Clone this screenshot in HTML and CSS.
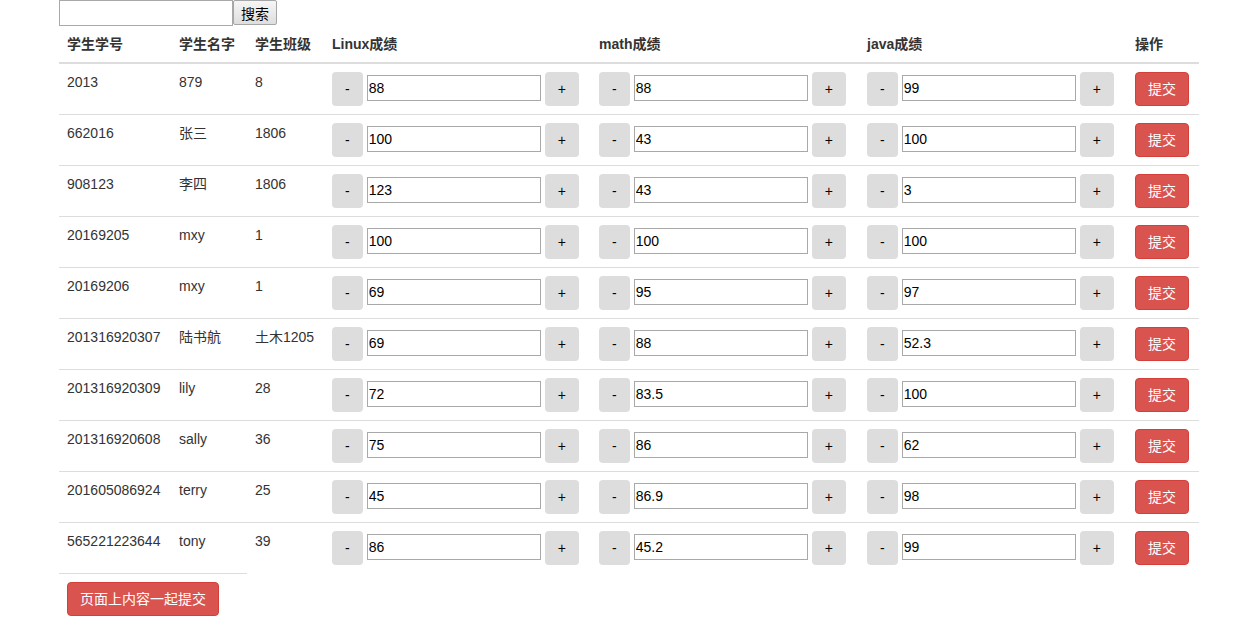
FILE: index.html
```html
<!DOCTYPE html>
<html lang="zh-CN">
<head>
<meta charset="utf-8">
<title>学生成绩</title>
<link rel="stylesheet" href="styles.css">
</head>
<body>
<div class="page">
  <form class="search">
    <input class="search-input" type="text"><button class="search-btn" type="button">搜索</button>
  </form>
  <table class="grades">
    <colgroup>
      <col class="c-id"><col class="c-name"><col class="c-class"><col class="c-score"><col class="c-score2"><col class="c-score2"><col class="c-op">
    </colgroup>
    <thead>
      <tr><th>学生学号</th><th>学生名字</th><th>学生班级</th><th>Linux成绩</th><th>math成绩</th><th>java成绩</th><th>操作</th></tr>
    </thead>
    <tbody id="rows"></tbody>
    <tfoot>
      <tr><td colspan="2"><button class="btn btn-danger" type="button">页面上内容一起提交</button></td></tr>
    </tfoot>
  </table>
</div>
<script>
var data = [
  ["2013","879","8","88","88","99"],
  ["662016","张三","1806","100","43","100"],
  ["908123","李四","1806","123","43","3"],
  ["20169205","mxy","1","100","100","100"],
  ["20169206","mxy","1","69","95","97"],
  ["201316920307","陆书航","土木1205","69","88","52.3"],
  ["201316920309","lily","28","72","83.5","100"],
  ["201316920608","sally","36","75","86","62"],
  ["201605086924","terry","25","45","86.9","98"],
  ["565221223644","tony","39","86","45.2","99"]
];
function stepper(v){
  return '<td><div class="stepper"><button class="btn btn-step" type="button">-</button><input class="score" type="text" value="'+v+'"><button class="btn btn-step" type="button">+</button></div></td>';
}
var html = "";
data.forEach(function(r){
  html += "<tr><td>"+r[0]+"</td><td>"+r[1]+"</td><td>"+r[2]+"</td>"+stepper(r[3])+stepper(r[4])+stepper(r[5])+'<td><button class="btn btn-danger" type="button">提交</button></td></tr>';
});
document.getElementById("rows").innerHTML = html;
</script>
</body>
</html>
```
FILE: styles.css
```css
* { box-sizing: border-box; }
html, body { margin: 0; padding: 0; background: #fff; }
body {
  font-family: "Liberation Sans", Arial, "Noto Sans CJK SC", sans-serif;
  font-size: 14px;
  line-height: 20px;
  color: #333;
}
.page { padding-left: 59px; width: 1199px; }
.search { display: flex; height: 26px; margin: 0; }
.search-input {
  width: 174px; height: 26px; margin: 0;
  border: 1px solid #a9a9a9; padding: 1px 2px;
  font: 13px "Liberation Sans", sans-serif;
}
.search-btn {
  width: 44px; height: 25px; margin: 0;
  border: 1px solid #a6a6a6; border-radius: 2px;
  background: linear-gradient(#f6f6f6, #dedede);
  font: 14px "Noto Sans CJK SC", sans-serif; color: #000;
  padding: 0; line-height: 22px;
}
.grades {
  width: 1140px; table-layout: fixed;
  border-collapse: collapse; border-spacing: 0;
}
.c-id { width: 112px; }
.c-name { width: 76px; }
.c-class { width: 77px; }
.c-score { width: 267px; }
.c-score2 { width: 268px; }
.c-op { width: 72px; }
.grades th {
  text-align: left; font-weight: bold; padding: 8px;
  border-bottom: 2px solid #ddd; vertical-align: bottom;
  font-family: "Liberation Sans", Arial, "Noto Sans CJK SC", sans-serif;
  white-space: nowrap;
}
.grades td {
  padding: 8px; border-top: 1px solid #ddd; vertical-align: top;
  white-space: nowrap;
}
.stepper { display: flex; align-items: center; gap: 4px; }
.btn {
  display: inline-block; margin: 0;
  padding: 6px 12px; font-size: 14px; line-height: 20px;
  border: 1px solid transparent; border-radius: 4px;
  font-family: "Liberation Sans", Arial, "Noto Sans CJK SC", sans-serif;
  cursor: pointer;
}
.btn-step { background: #ddd; color: #000; }
.btn-danger {
  background: #d9534f; border-color: #d43f3a; color: #fff;
}
.score {
  width: 174px; height: 26px; margin: 0 0 2px 0;
  border: 1px solid #a9a9a9; padding: 1px 1px;
  font: 14px "Liberation Sans", Arial, sans-serif; color: #000;
}
```
